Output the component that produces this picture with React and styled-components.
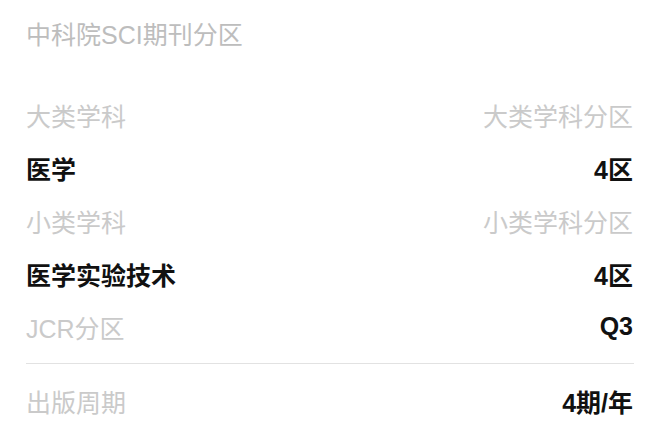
import React from "react";
import styled, { createGlobalStyle } from "styled-components";

const GlobalStyle = createGlobalStyle`
  body {
    margin: 0;
    background: #fff;
    font-family: "Liberation Sans", "Noto Sans CJK SC", sans-serif;
  }
`;

const rows = [
  { label: "大类学科", value: "大类学科分区", head: true },
  { label: "医学", value: "4区" },
  { label: "小类学科", value: "小类学科分区", head: true },
  { label: "医学实验技术", value: "4区" },
  { label: "JCR分区", value: "Q3", muted: true },
];

export default function App() {
  return (
    <>
      <GlobalStyle />
      <Container>
        <Title>中科院SCI期刊分区</Title>
        <Table>
          {rows.map((r, i) => (
            <Row key={i}>
              <Cell $light={r.head || r.muted}>{r.label}</Cell>
              <Cell $light={r.head}>{r.value}</Cell>
            </Row>
          ))}
        </Table>
        <Divider />
        <Row>
          <Cell $light>出版周期</Cell>
          <Cell>4期/年</Cell>
        </Row>
      </Container>
    </>
  );
}

const Container = styled.div`
  width: 665px;
  box-sizing: border-box;
  padding: 18px 32px 0 26px;
`;

const Title = styled.div`
  height: 34px;
  line-height: 34px;
  font-size: 25px;
  color: #bdbdbd;
`;

const Table = styled.div`
  margin-top: 36px;
`;

const Row = styled.div`
  display: flex;
  justify-content: space-between;
  align-items: center;
  height: 53px;
`;

const Cell = styled.div`
  font-size: 25px;
  color: ${(p) => (p.$light ? "#cacaca" : "#111")};
  font-weight: ${(p) => (p.$light ? 400 : 700)};
`;

const Divider = styled.div`
  height: 1px;
  background: #e2e2e2;
  margin: 10px -1px 10px 0;
`;
